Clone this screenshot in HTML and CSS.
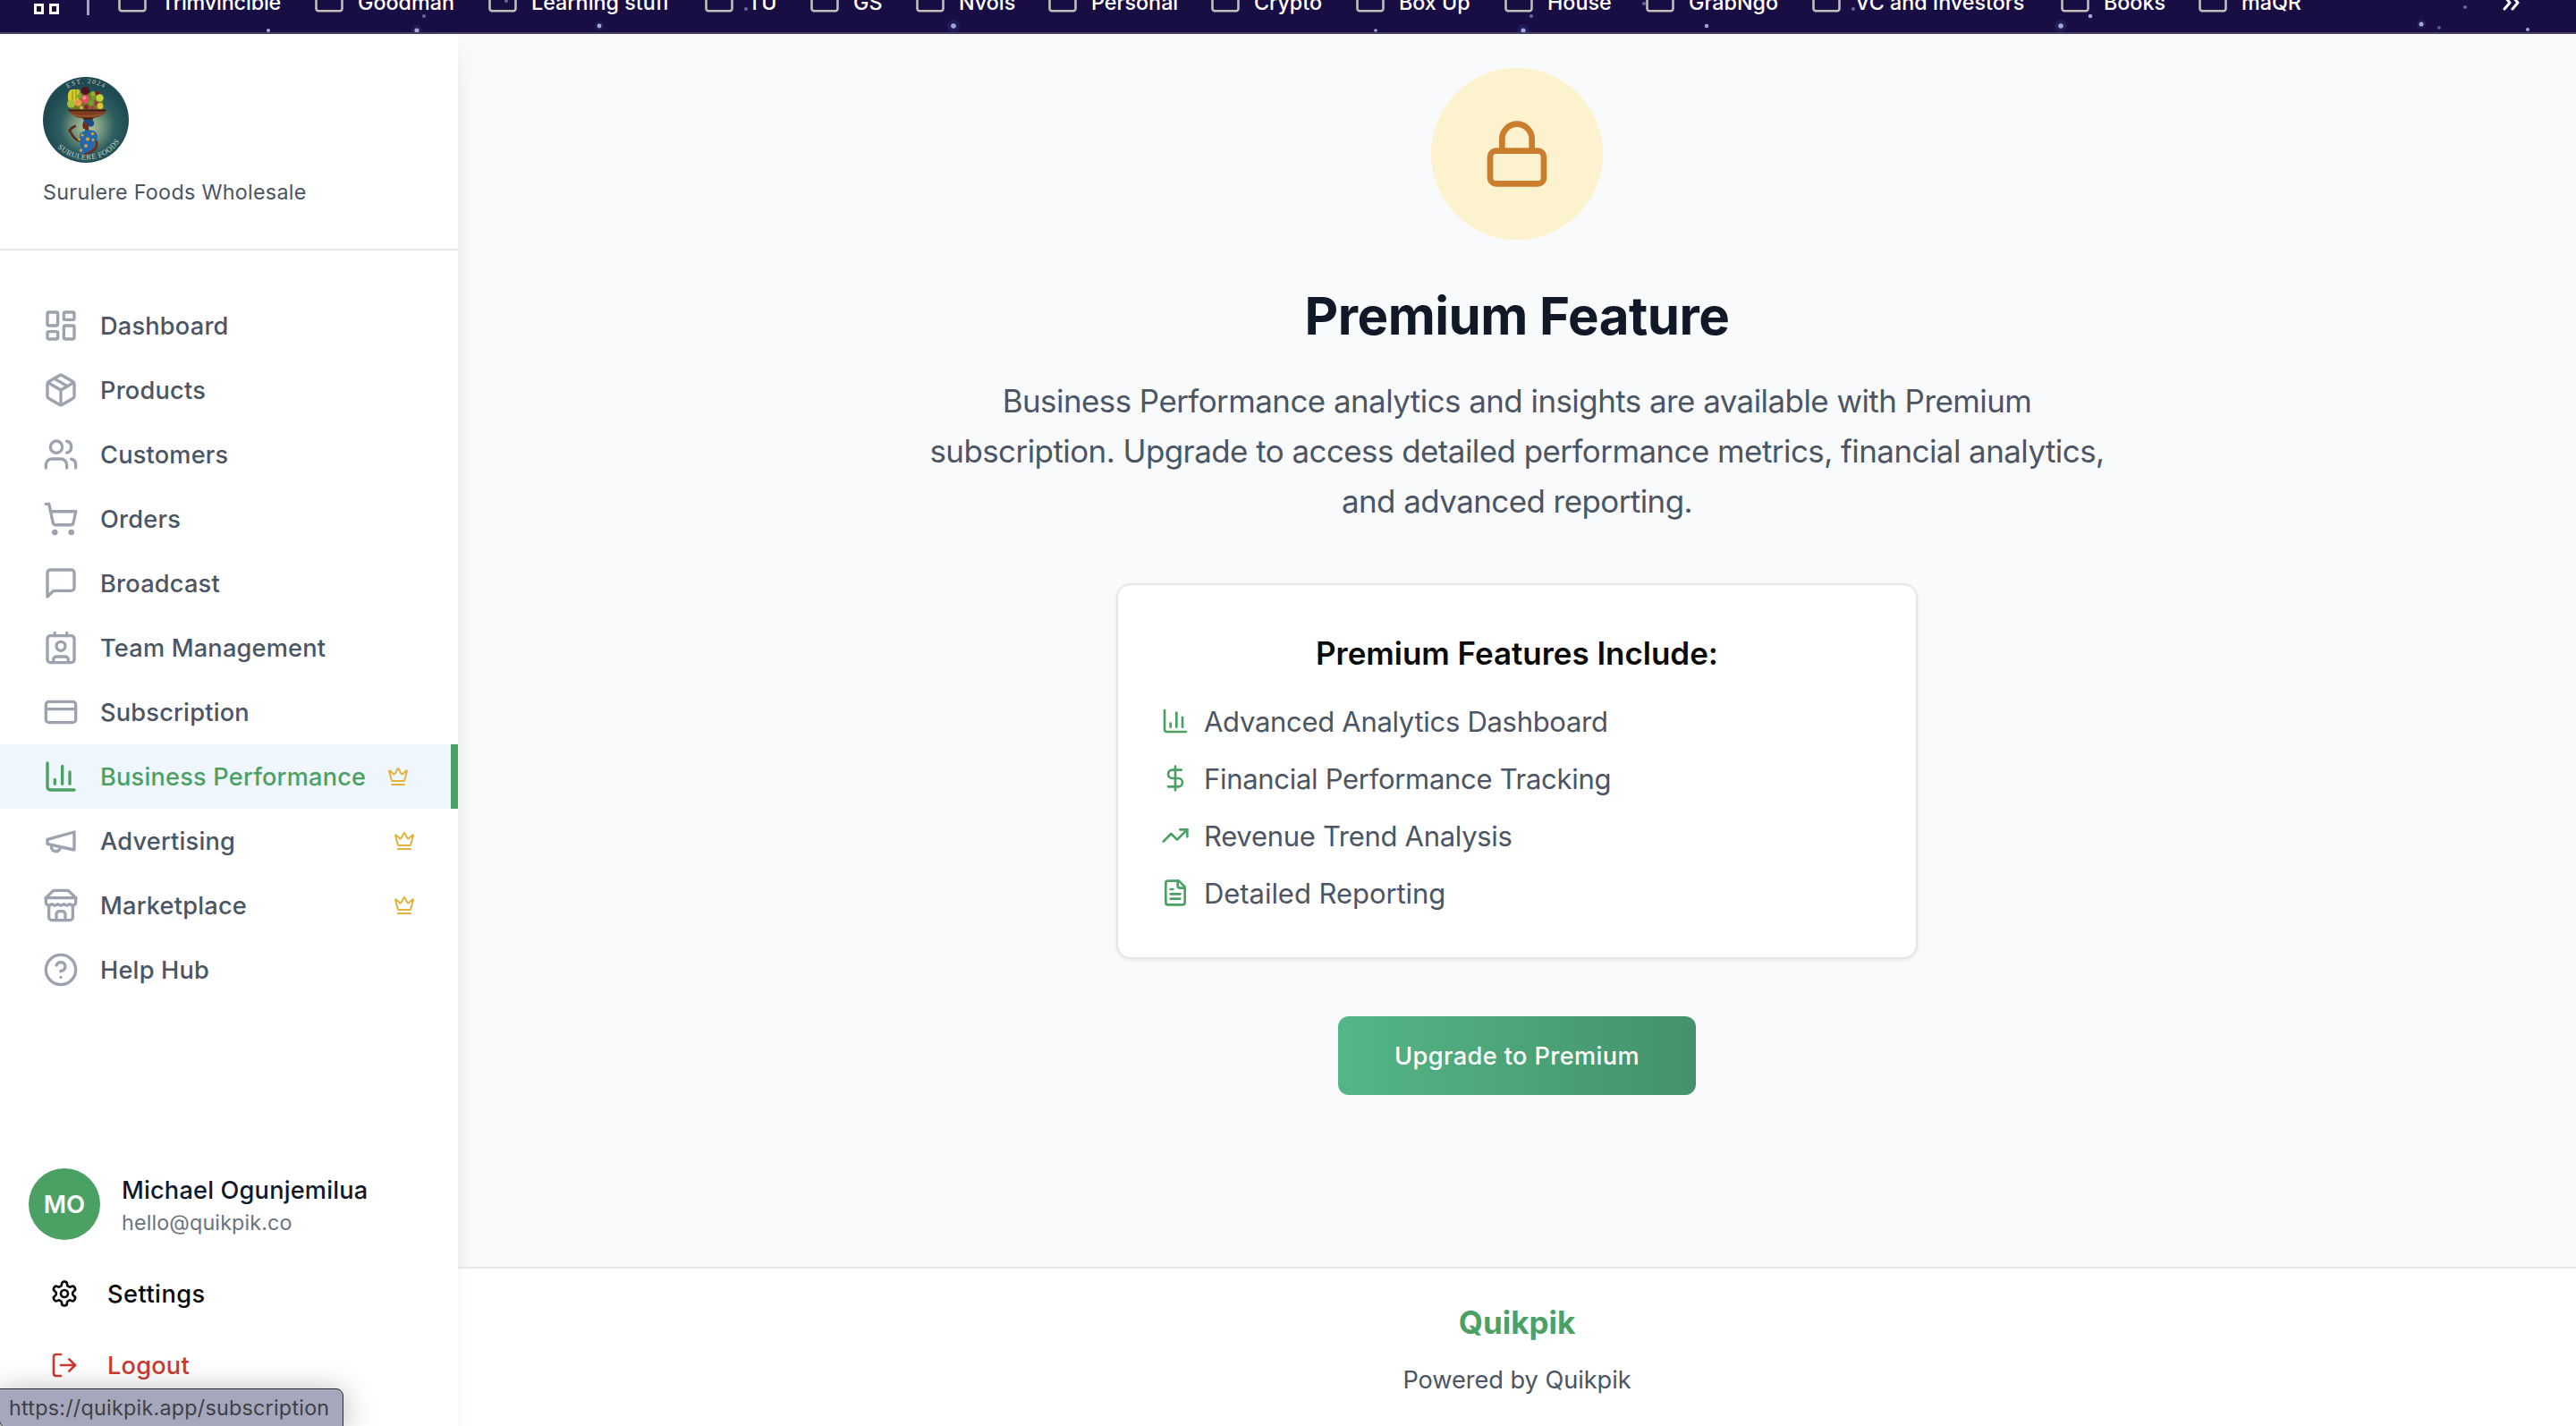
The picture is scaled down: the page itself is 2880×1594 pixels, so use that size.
FILE: index.html
```html
<!DOCTYPE html>
<html lang="en">
<head>
<meta charset="utf-8">
<title>Quikpik</title>
<link rel="stylesheet" href="styles.css">
</head>
<body>
<svg class="defs" aria-hidden="true">
  <symbol id="folder" viewBox="0 0 32 26"><path d="M1.5 4V21.5a2.5 2.5 0 0 0 2.5 2.7H28a2.5 2.5 0 0 0 2.5-2.7V4a3 3 0 0 0-3-3H4.500a3 3 0 0 0-3 3z" stroke-width="2.6"/></symbol>
  <symbol id="dashboard" viewBox="0 0 24 24"><rect width="7" height="9" x="3" y="3" rx="1"/><rect width="7" height="5" x="14" y="3" rx="1"/><rect width="7" height="9" x="14" y="12" rx="1"/><rect width="7" height="5" x="3" y="16" rx="1"/></symbol>
  <symbol id="package" viewBox="0 0 24 24"><path d="m7.500 4.270 9 5.150"/><path d="M21 8a2 2 0 0 0-1-1.730l-7-4a2 2 0 0 0-2 0l-7 4A2 2 0 0 0 3 8v8a2 2 0 0 0 1 1.730l7 4a2 2 0 0 0 2 0l7-4A2 2 0 0 0 21 16Z"/><path d="m3.300 7 8.700 5 8.700-5"/><path d="M12 22V12"/></symbol>
  <symbol id="users" viewBox="0 0 24 24"><path d="M16 21v-2a4 4 0 0 0-4-4H6a4 4 0 0 0-4 4v2"/><circle cx="9" cy="7" r="4"/><path d="M22 21v-2a4 4 0 0 0-3-3.870"/><path d="M16 3.130a4 4 0 0 1 0 7.750"/></symbol>
  <symbol id="cart" viewBox="0 0 24 24"><circle cx="8" cy="21" r="1"/><circle cx="19" cy="21" r="1"/><path d="M2.050 2.050h2l2.660 12.420a2 2 0 0 0 2 1.580h9.780a2 2 0 0 0 1.950-1.570l1.650-7.430H5.120"/></symbol>
  <symbol id="message" viewBox="0 0 24 24"><path d="M21 15a2 2 0 0 1-2 2H7l-4 4V5a2 2 0 0 1 2-2h14a2 2 0 0 1 2 2z"/></symbol>
  <symbol id="contact" viewBox="0 0 24 24"><path d="M16 2v2"/><path d="M7 22v-2a2 2 0 0 1 2-2h6a2 2 0 0 1 2 2v2"/><path d="M8 2v2"/><circle cx="12" cy="11" r="3"/><rect x="3" y="4" width="18" height="18" rx="2"/></symbol>
  <symbol id="card" viewBox="0 0 24 24"><rect width="20" height="14" x="2" y="5" rx="2"/><path d="M2 10h20"/></symbol>
  <symbol id="chart" viewBox="0 0 24 24"><path d="M3 3v16a2 2 0 0 0 2 2h16"/><path d="M18 17V9"/><path d="M13 17V5"/><path d="M8 17v-3"/></symbol>
  <symbol id="megaphone" viewBox="0 0 24 24"><path d="m3 11 18-5v12L3 14v-3z"/><path d="M11.600 16.800a3 3 0 1 1-5.800-1.600"/></symbol>
  <symbol id="store" viewBox="0 0 24 24"><path d="m2 7 4.410-4.410A2 2 0 0 1 7.830 2h8.340a2 2 0 0 1 1.420.590L22 7"/><path d="M4 12v8a2 2 0 0 0 2 2h12a2 2 0 0 0 2-2v-8"/><path d="M15 22v-4a2 2 0 0 0-2-2h-2a2 2 0 0 0-2 2v4"/><path d="M2 7h20"/><path d="M22 7v3a2 2 0 0 1-2 2a2.700 2.700 0 0 1-1.590-.630.700.700 0 0 0-.820 0A2.700 2.700 0 0 1 16 12a2.700 2.700 0 0 1-1.590-.630.700.700 0 0 0-.820 0A2.700 2.700 0 0 1 12 12a2.700 2.700 0 0 1-1.590-.630.700.700 0 0 0-.820 0A2.700 2.700 0 0 1 8 12a2.700 2.700 0 0 1-1.590-.630.700.700 0 0 0-.820 0A2.700 2.700 0 0 1 4 12a2 2 0 0 1-2-2V7"/></symbol>
  <symbol id="help" viewBox="0 0 24 24"><circle cx="12" cy="12" r="10"/><path d="M9.090 9a3 3 0 0 1 5.830 1c0 2-3 3-3 3"/><path d="M12 17h.010"/></symbol>
  <symbol id="crown" viewBox="0 0 24 24"><path d="M11.562 3.266a.5.5 0 0 1 .876 0L15.390 8.870a1 1 0 0 0 1.516.294L21.183 5.500a.5.5 0 0 1 .798.519l-2.834 10.246a1 1 0 0 1-.956.734H5.810a1 1 0 0 1-.957-.734L2.020 6.020a.5.5 0 0 1 .798-.519l4.276 3.664a1 1 0 0 0 1.516-.294z"/><path d="M5 21h14"/></symbol>
  <symbol id="settings" viewBox="0 0 24 24"><path d="M12.220 2h-.440a2 2 0 0 0-2 2v.180a2 2 0 0 1-1 1.730l-.430.250a2 2 0 0 1-2 0l-.150-.080a2 2 0 0 0-2.730.730l-.220.380a2 2 0 0 0 .730 2.730l.150.100a2 2 0 0 1 1 1.720v.510a2 2 0 0 1-1 1.740l-.150.090a2 2 0 0 0-.730 2.730l.220.380a2 2 0 0 0 2.730.730l.150-.080a2 2 0 0 1 2 0l.430.250a2 2 0 0 1 1 1.730V20a2 2 0 0 0 2 2h.440a2 2 0 0 0 2-2v-.180a2 2 0 0 1 1-1.730l.430-.250a2 2 0 0 1 2 0l.150.080a2 2 0 0 0 2.730-.730l.220-.390a2 2 0 0 0-.730-2.730l-.150-.080a2 2 0 0 1-1-1.740v-.500a2 2 0 0 1 1-1.740l.150-.090a2 2 0 0 0 .730-2.730l-.220-.380a2 2 0 0 0-2.730-.730l-.150.080a2 2 0 0 1-2 0l-.430-.250a2 2 0 0 1-1-1.730V4a2 2 0 0 0-2-2z"/><circle cx="12" cy="12" r="3"/></symbol>
  <symbol id="logout" viewBox="0 0 24 24"><path d="M9 21H5a2 2 0 0 1-2-2V5a2 2 0 0 1 2-2h4"/><path d="m16 17 5-5-5-5"/><path d="M21 12H9"/></symbol>
  <symbol id="lock" viewBox="0 0 24 24"><rect width="18" height="11" x="3" y="11" rx="2"/><path d="M7 11V7a5 5 0 0 1 10 0v4"/></symbol>
  <symbol id="dollar" viewBox="0 0 24 24"><path d="M12 2v20"/><path d="M17 5H9.500a3.500 3.500 0 0 0 0 7h5a3.500 3.500 0 0 1 0 7H6"/></symbol>
  <symbol id="trend" viewBox="0 0 24 24"><path d="m22 7-8.500 8.500-5-5L2 17"/><path d="M16 7h6v6"/></symbol>
  <symbol id="file" viewBox="0 0 24 24"><path d="M15 2H6a2 2 0 0 0-2 2v16a2 2 0 0 0 2 2h12a2 2 0 0 0 2-2V7Z"/><path d="M14 2v4a2 2 0 0 0 2 2h4"/><path d="M10 9H8"/><path d="M16 13H8"/><path d="M16 17H8"/></symbol>
</svg>

<div class="bookmarks-bar">
  <svg class="stars" viewBox="0 0 2880 36" aria-hidden="true">
    <g class="glow"><circle cx="466" cy="34" r="6"/><circle cx="670" cy="29" r="5"/><circle cx="1066" cy="29" r="7"/><circle cx="1703" cy="34" r="7"/><circle cx="2304" cy="29" r="7"/><circle cx="2707" cy="27" r="5"/></g>
    <circle cx="300" cy="34" r="2"/><circle cx="466" cy="34" r="2.6"/><circle class="dim" cx="474" cy="18" r="2"/><circle cx="670" cy="29" r="2.4"/><circle class="dim" cx="566" cy="1" r="2"/><circle class="dim" cx="834" cy="10" r="2"/><circle cx="1066" cy="29" r="2.8"/><circle cx="1538" cy="34" r="1.800"/><circle cx="1703" cy="34" r="2.600"/><circle class="dim" cx="1712" cy="18" r="2"/><circle class="dim" cx="1838" cy="4" r="2"/><circle cx="1908" cy="29" r="2.200"/><circle class="dim" cx="2072" cy="10" r="2"/><circle cx="2304" cy="29" r="2.800"/><circle cx="2337" cy="18" r="2.300"/><circle cx="2707" cy="27" r="2.500"/><circle class="dim" cx="2727" cy="31" r="1.800"/><circle class="dim" cx="2756" cy="8" r="2"/><circle cx="2826" cy="33" r="2"/>
  </svg>
  <div class="apps"><i></i><i></i></div>
  <div class="bar-divider"></div>
  <div class="bookmarks">
    <span class="bookmark tight"><svg><use href="#folder"/></svg>Trimvincible</span>
    <span class="bookmark"><svg><use href="#folder"/></svg>Goodman</span>
    <span class="bookmark"><svg><use href="#folder"/></svg>Learning stuff</span>
    <span class="bookmark"><svg><use href="#folder"/></svg>TU</span>
    <span class="bookmark"><svg><use href="#folder"/></svg>GS</span>
    <span class="bookmark"><svg><use href="#folder"/></svg>Nvois</span>
    <span class="bookmark"><svg><use href="#folder"/></svg>Personal</span>
    <span class="bookmark"><svg><use href="#folder"/></svg>Crypto</span>
    <span class="bookmark"><svg><use href="#folder"/></svg>Box Up</span>
    <span class="bookmark"><svg><use href="#folder"/></svg>House</span>
    <span class="bookmark"><svg><use href="#folder"/></svg>GrabNgo</span>
    <span class="bookmark"><svg><use href="#folder"/></svg>VC and Investors</span>
    <span class="bookmark"><svg><use href="#folder"/></svg>Books</span>
    <span class="bookmark"><svg><use href="#folder"/></svg>maQR</span>
  </div>
  <svg class="overflow" viewBox="0 0 22 20"><path d="m3 3 6 7-6 7M12 3l6 7-6 7"/></svg>
</div>

<div class="layout">
  <aside class="sidebar">
    <div class="brand">
      <svg class="logo" viewBox="0 0 96 96" role="img" aria-label="Surulere Foods">
        <defs>
          <radialGradient id="halo" cx="0.520" cy="0.580" r="0.480"><stop offset="0" stop-color="#b9c99c"/><stop offset="0.300" stop-color="#7f9f83"/><stop offset="0.650" stop-color="#2f5f60"/><stop offset="1" stop-color="#1f4a52"/></radialGradient>
          <path id="arc-top" d="M27.500 12.700A41 41 0 0 1 70 13.400"/>
          <path id="arc-bottom" d="M16.200 79A45 45 0 0 0 85 73.500"/>
        </defs>
        <circle cx="48" cy="48" r="48" fill="url(#halo)"/>
        <g>
          <rect x="29" y="18" width="38" height="19" rx="6" fill="#6d7a24"/>
          <path d="M29 29c-2-7-1-12 1-14 3-2 3 0 4-1 2-1 2 1 4 0s3 1 4 2l-3 14z" fill="#d9c92b"/>
          <path d="M33 16v10M37 15v10M41 16v9" stroke="#7e8a1e" stroke-width="1"/>
          <circle cx="47.500" cy="15.500" r="4.500" fill="#551019"/><circle cx="56" cy="19" r="3" fill="#8fae30"/><circle cx="61" cy="18" r="2.600" fill="#731a25"/>
          <circle cx="63.500" cy="23.500" r="4.300" fill="#c3d13a"/><circle cx="47.500" cy="25" r="5" fill="#d9535a"/><circle cx="46.500" cy="23.500" r="2" fill="#ef9690"/>
          <circle cx="39.500" cy="29" r="3.800" fill="#ee9746"/><circle cx="31.500" cy="30" r="4.500" fill="#a9bf36"/><circle cx="54" cy="29" r="3" fill="#6fa136"/>
          <circle cx="56" cy="23.500" r="2.500" fill="#6f9b30"/><circle cx="59.500" cy="29.500" r="2.400" fill="#a4314a"/><circle cx="64" cy="32.500" r="3.400" fill="#ddc52f"/>
          <circle cx="48.500" cy="33.500" r="2.600" fill="#8d2638"/><circle cx="41" cy="21.500" r="2.800" fill="#7da332"/><circle cx="55" cy="34.500" r="2.200" fill="#b33b49"/><circle cx="43" cy="34.500" r="2" fill="#c9ba43"/>
        </g>
        <path d="M28.500 36.500h42c0 4-5 7.500-11 9-4 1-15 1-20 0-6-2-10-5-11-9z" fill="#7d3f20"/>
        <path d="M28.500 36.500h42v1.800h-42z" fill="#3b1b12"/>
        <path d="M34 42c8 2.500 22 2.500 31 0" stroke="#a2623a" stroke-width="1.200" fill="none"/>
        <path d="M44 45.500h13l-2 3h-9z" fill="#4a2416"/>
        <path d="M45 51c0-3 4-4 7-3.500 4 0 6 2.500 5 6-1 2-4 3-6 1.500z" fill="#1c4c8c"/>
        <path d="M45 51c3-1 5 0 6 3l.5 6h-4.500v-2c-2 .300-3-.500-2.500-3-.500-1-.500-2 .500-4z" fill="#6a2f1e"/>
        <path d="M42 72c-5 0-9-6-12.500-12.500M30 60.500c1-3 2-4 6-5.500" stroke="#5e271b" stroke-width="2.600" fill="none" stroke-linecap="round"/>
        <path d="M41 64c3-3 7-5 11-4.500 5 0 8 2 9 6l-.5 7-3 1c0 6-3 11-8 13h-7c-2-2-2-5-1-8z" fill="#2368a8"/>
        <g fill="#e0a03c"><circle cx="44" cy="65" r="1.600"/><circle cx="50" cy="69.500" r="2.100"/><circle cx="55.500" cy="63.500" r="1.700"/><circle cx="40.500" cy="70" r="1.400"/><circle cx="48" cy="77" r="1.900"/><circle cx="42.500" cy="82" r="1.700"/><circle cx="56" cy="70.500" r="1.400"/></g>
        <path d="M60 73c.500 5-1 8-5 10l-8 4" stroke="#68301f" stroke-width="3" fill="none" stroke-linecap="round"/>
        <text class="logo-text"><textPath href="#arc-top" textLength="42">EST. 2024</textPath></text>
        <text class="logo-text logo-name"><textPath href="#arc-bottom" textLength="80">SURULERE FOODS</textPath></text>
      </svg>
      <p class="brand-name">Surulere Foods Wholesale</p>
    </div>

    <nav class="nav">
      <a class="nav-item"><svg class="icon"><use href="#dashboard"/></svg><span>Dashboard</span></a>
      <a class="nav-item"><svg class="icon"><use href="#package"/></svg><span>Products</span></a>
      <a class="nav-item"><svg class="icon"><use href="#users"/></svg><span>Customers</span></a>
      <a class="nav-item"><svg class="icon"><use href="#cart"/></svg><span>Orders</span></a>
      <a class="nav-item"><svg class="icon"><use href="#message"/></svg><span>Broadcast</span></a>
      <a class="nav-item"><svg class="icon"><use href="#contact"/></svg><span>Team Management</span></a>
      <a class="nav-item"><svg class="icon"><use href="#card"/></svg><span>Subscription</span></a>
      <a class="nav-item active"><svg class="icon"><use href="#chart"/></svg><span>Business Performance</span><svg class="crown"><use href="#crown"/></svg></a>
      <a class="nav-item"><svg class="icon"><use href="#megaphone"/></svg><span>Advertising</span><svg class="crown"><use href="#crown"/></svg></a>
      <a class="nav-item"><svg class="icon"><use href="#store"/></svg><span>Marketplace</span><svg class="crown"><use href="#crown"/></svg></a>
      <a class="nav-item"><svg class="icon"><use href="#help"/></svg><span>Help Hub</span></a>
    </nav>

    <div class="account">
      <div class="user">
        <div class="avatar">MO</div>
        <div class="user-text">
          <p class="user-name">Michael Ogunjemilua</p>
          <p class="user-email">hello@quikpik.co</p>
        </div>
      </div>
      <div class="actions">
        <a class="action"><svg><use href="#settings"/></svg>Settings</a>
        <a class="action logout"><svg><use href="#logout"/></svg>Logout</a>
      </div>
    </div>
  </aside>

  <div class="content">
    <main class="premium">
      <div class="lock-badge"><svg><use href="#lock"/></svg></div>
      <h1>Premium Feature</h1>
      <p class="lead">Business Performance analytics and insights are available with Premium<br>subscription. Upgrade to access detailed performance metrics, financial analytics,<br>and advanced reporting.</p>
      <section class="card">
        <h2>Premium Features Include:</h2>
        <ul>
          <li><svg><use href="#chart"/></svg><span>Advanced Analytics Dashboard</span></li>
          <li><svg><use href="#dollar"/></svg><span>Financial Performance Tracking</span></li>
          <li><svg><use href="#trend"/></svg><span>Revenue Trend Analysis</span></li>
          <li><svg><use href="#file"/></svg><span class="loose">Detailed Reporting</span></li>
        </ul>
      </section>
      <button class="upgrade">Upgrade to Premium</button>
    </main>
    <footer class="footer">
      <strong>Quikpik</strong>
      <p>Powered by Quikpik</p>
    </footer>
  </div>
</div>

<div class="link-status">https://quikpik.app/subscription</div>
</body>
</html>
```
FILE: styles.css
```css
* { box-sizing: border-box; margin: 0; padding: 0; }

body {
  height: 1594px;
  display: flex;
  flex-direction: column;
  overflow: hidden;
  font-family: Inter, "Liberation Sans", sans-serif;
  color: #0a0a0a;
  background: #f9fafc;
}

svg { fill: none; stroke: currentColor; stroke-width: 2; stroke-linecap: round; stroke-linejoin: round; flex: none; }
.defs { position: absolute; width: 0; height: 0; }

/* Browser bookmarks strip */
.bookmarks-bar {
  position: relative;
  flex: none;
  display: flex;
  align-items: flex-start;
  height: 38px;
  padding-left: 38px;
  overflow: hidden;
  background: #180e44;
  border-bottom: 2px solid #494068;
  color: #fff;
}
.stars { position: absolute; left: 0; top: 0; width: 2880px; height: 36px; fill: #a7a6d6; stroke: none; }
.stars .dim { fill: #6b659a; }
.stars .glow { fill: #2a3a80; opacity: .35; }
.apps { display: flex; gap: 6px; padding-top: 4px; }
.apps i { width: 11px; height: 12px; border: 3px solid #fff; }
.bar-divider { width: 3px; height: 17px; margin-left: 31px; background: #a5a1bb; }
.bookmarks {
  display: grid;
  grid-template-columns: 220px 194px 242px 118px 118px 148px 182px 162px 166px 158px 186px 278px 154px 339px;
  margin: -12px 0 0 32px;
}
.bookmark { display: flex; gap: 16px; height: 28px; font-size: 23.3px; font-weight: 500; line-height: 29px; position: relative; white-space: nowrap; }
.bookmark.tight { letter-spacing: -.15px; }
.bookmark svg { width: 32px; height: 26px; color: #c2beb9; }
.overflow { width: 22px; height: 20px; margin-top: -7px; stroke-width: 3; }

.layout { flex: 1; display: flex; min-height: 0; }

/* Sidebar */
.sidebar {
  position: relative;
  flex: none;
  width: 512px;
  display: flex;
  flex-direction: column;
  background: #fff;
  box-shadow: 0 20px 30px -6px rgba(0, 0, 0, .1), 0 8px 12px -8px rgba(0, 0, 0, .1);
}
.brand { padding: 48px 48px 47px; border-bottom: 2px solid #e5e7eb; }
.logo { display: block; width: 96px; height: 96px; stroke: none; }
.logo-text { font: 7.5px "Liberation Serif", serif; fill: #c3d6cf; }
.logo-name { font-size: 8.5px; }
.brand-name { margin-top: 17px; font-size: 23.3px; line-height: 32px; letter-spacing: .3px; color: #4b5563; }

.nav { padding-top: 48px; }
.nav-item {
  display: flex;
  align-items: center;
  gap: 24px;
  height: 72px;
  padding: 0 48px;
  font-size: 27.2px;
  font-weight: 500;
  line-height: 40px;
  letter-spacing: .2px;
  white-space: nowrap;
  color: #4b5563;
}
.nav-item span { padding-top: 2px; }
.icon { width: 40px; height: 40px; color: #9ca3af; }
.nav-item.active { color: #4ba163; background: #eff6fe; border-right: 8px solid #4ba163; }
.active .icon { color: #4ba163; }
.crown { width: 24px; height: 24px; margin-left: auto; color: #e4b23b; }

.account { margin-top: auto; padding: 0 32px 32px; }
.user { display: flex; align-items: center; gap: 24px; }
.user-text { padding-top: 2px; }
.avatar {
  width: 80px;
  height: 80px;
  display: flex;
  align-items: center;
  justify-content: center;
  border-radius: 50%;
  background: #4ba163;
  color: #fff;
  font-size: 27.5px;
  font-weight: 600;
}
.user-name { font-size: 27.2px; font-weight: 500; line-height: 40px; letter-spacing: .17px; color: #111827; }
.user-email { font-size: 23.3px; line-height: 32px; letter-spacing: .15px; color: #6b7280; }
.actions { display: flex; flex-direction: column; gap: 8px; margin-top: 24px; }
.action {
  display: flex;
  align-items: center;
  gap: 32px;
  height: 72px;
  padding: 0 24px;
  font-size: 27.2px;
  font-weight: 500;
  letter-spacing: .45px;
}
.action svg { width: 32px; height: 32px; }
.action.logout { color: #cb3a31; letter-spacing: .2px; }

/* Main column */
.content { flex: 1; display: flex; flex-direction: column; }
.premium { flex: 1; display: flex; flex-direction: column; align-items: center; padding-top: 38px; }
.lock-badge {
  display: flex;
  align-items: center;
  justify-content: center;
  width: 192px;
  height: 192px;
  border-radius: 50%;
  background: #fcf2ce;
  color: #cb7d2e;
}
.lock-badge svg { width: 80px; height: 80px; }
h1 { margin-top: 49px; font-size: 58.2px; font-weight: 700; line-height: 72px; letter-spacing: -.52px; color: #111827; }
.lead { margin-top: 31px; font-size: 34.9px; line-height: 56px; letter-spacing: -.53px; text-align: center; color: #4b5563; }
.card {
  width: 896px;
  margin-top: 64px;
  padding: 48px;
  border: 2px solid #e5e5e5;
  border-radius: 16px;
  background: #fff;
  box-shadow: 0 2px 4px rgba(0, 0, 0, .06);
}
.card h2 { font-size: 35px; font-weight: 600; line-height: 56px; letter-spacing: -.04px; text-align: center; }
.card ul { display: flex; flex-direction: column; gap: 16px; margin-top: 24px; list-style: none; }
.card li { display: flex; align-items: center; gap: 16px; height: 48px; font-size: 31px; line-height: 46px; letter-spacing: -.3px; color: #4b5563; }
.card li span { padding-top: 2px; }
.card li .loose { letter-spacing: -.05px; }
.card li svg { width: 32px; height: 32px; color: #4ba163; }
.upgrade {
  width: 400px;
  height: 88px;
  margin-top: 64px;
  padding-top: 1px;
  border: 0;
  border-radius: 12px;
  background: linear-gradient(to right, #54b686, #43926b);
  color: #fff;
  font: 500 27.2px/40px Inter, sans-serif;
  letter-spacing: .38px;
}
.footer {
  position: relative;
  display: flex;
  flex-direction: column;
  align-items: center;
  gap: 17px;
  padding: 32px 0 31px;
  border-top: 2px solid #e5e7eb;
  background: #fff;
  box-shadow: inset 16px 0 16px -14px rgba(0, 0, 0, .04);
}
.footer strong { font-size: 35px; font-weight: 700; line-height: 56px; color: #4ba163; }
.footer p { font-size: 27.2px; line-height: 40px; letter-spacing: -.05px; color: #4b5563; }

/* Browser link preview */
.link-status {
  position: absolute;
  left: -1px;
  top: 1552px;
  width: 385px;
  height: 44px;
  padding-left: 10px;
  border: 1px solid #2b2b2b;
  border-radius: 0 8px 0 8px;
  background: #a5a8bc;
  box-shadow: 0 4px 34px rgba(0, 0, 0, .3);
  color: #3f3f44;
  font-size: 23.3px;
  line-height: 42px;
  letter-spacing: .25px;
}
```
